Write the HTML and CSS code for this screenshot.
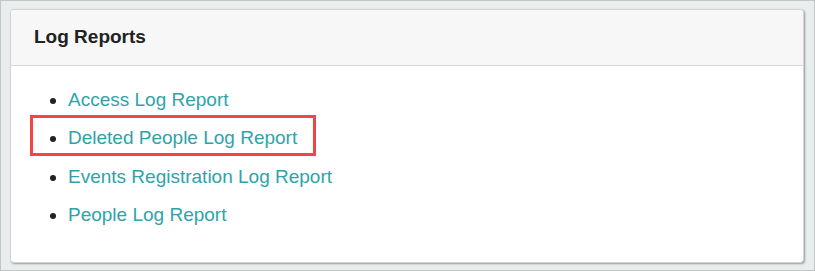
FILE: index.html
```html
<!DOCTYPE html>
<html>
<head>
<meta charset="utf-8">
<link rel="stylesheet" href="styles.css">
</head>
<body>
<div class="frame">
  <section class="panel">
    <header class="panel-head">Log Reports</header>
    <div class="panel-body">
      <ul class="reports">
        <li><a href="#">Access Log Report</a></li>
        <li class="marked"><a href="#">Deleted People Log Report</a></li>
        <li><a href="#">Events Registration Log Report</a></li>
        <li><a href="#">People Log Report</a></li>
      </ul>
    </div>
  </section>
</div>
</body>
</html>
```
FILE: styles.css
```css
html, body {
  margin: 0;
  padding: 0;
}
body {
  width: 815px;
  height: 271px;
  font-family: "Liberation Sans", Arial, sans-serif;
  background: #e9eded;
}
.frame {
  box-sizing: border-box;
  width: 815px;
  height: 271px;
  border: 1px solid #c4c6c6;
  padding: 8px 10px 7px 9px;
  background: #e9eded;
}
.panel {
  box-sizing: border-box;
  height: 254px;
  background: #fff;
  border: 1px solid #d2d4d4;
  border-radius: 4px;
  box-shadow: 1px 1px 2px rgba(0, 0, 0, 0.35);
  overflow: hidden;
}
.panel-head {
  height: 56px;
  box-sizing: border-box;
  padding: 0 23px 1px;
  display: flex;
  align-items: center;
  background: #f7f7f7;
  border-bottom: 1px solid #d6d6d6;
  font-size: 19px;
  font-weight: bold;
  color: #222;
}
.panel-body {
  padding: 15px 20px 0;
}
.reports {
  margin: 0;
  padding-left: 37px;
  list-style: disc;
  color: #222;
  font-size: 19px;
}
.reports li {
  line-height: 38.4px;
  position: relative;
}
.reports a {
  color: #2fa3aa;
  text-decoration: none;
}
.marked::after {
  content: "";
  position: absolute;
  left: -38px;
  top: -4px;
  width: 286px;
  height: 41px;
  box-sizing: border-box;
  border: 3px solid #f24646;
  pointer-events: none;
}
```
